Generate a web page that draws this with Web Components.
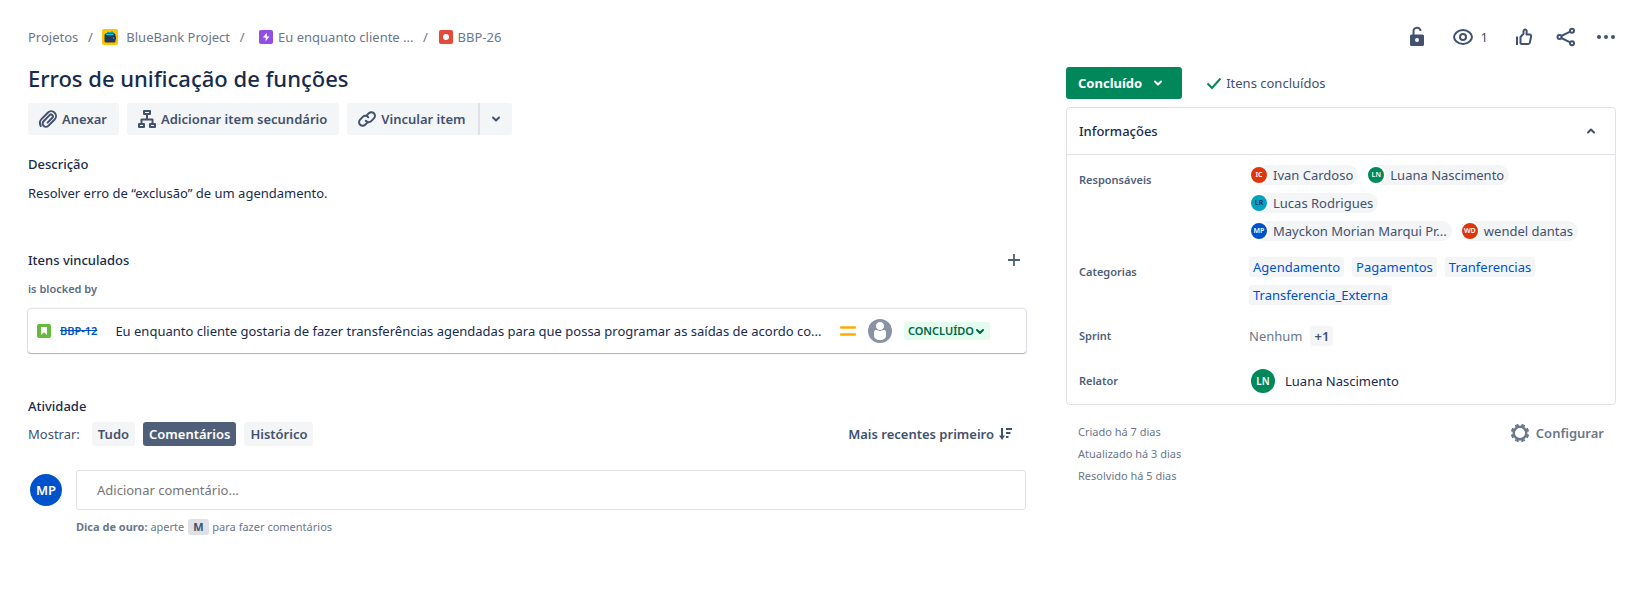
<!DOCTYPE html>
<html lang="pt-BR">
<head>
<meta charset="utf-8">
<meta name="viewport" content="width=device-width, initial-scale=1">
<title>BBP-26 Erros de unificação de funções</title>
<style>
  body {
    margin: 0;
    background: #fff;
    color: #172b4d;
    font: 400 13px/20px "Noto Sans", "Open Sans", sans-serif;
    --subtle: #6b778c;
    --button-text: #42526e;
    --surface: #f4f5f7;
    --line: #dfe1e6;
    --link: #0052cc;
    --green: #00875a;
  }
</style>
</head>
<body>
<issue-page></issue-page>

<script>
const define = (name, html, setup) => {
  const template = document.createElement('template');
  template.innerHTML = html;
  customElements.define(name, class extends HTMLElement {
    constructor() {
      super();
      this.attachShadow({ mode: 'open' }).append(template.content.cloneNode(true));
    }
    connectedCallback() {
      if (setup) setup(this, this.shadowRoot);
    }
  });
};

const reset = `
  *, *::before { box-sizing: border-box; }
  button { font: inherit; color: inherit; border: 0; margin: 0; padding: 0; background: none; cursor: pointer; }
  h1, h2, p, dl, dd, ul, ol { margin: 0; padding: 0; list-style: none; }
  a { color: inherit; text-decoration: none; }
`;

const stroke = (d, w = 2) =>
  `<path d="${d}" fill="none" stroke="currentColor" stroke-width="${w}" stroke-linecap="round" stroke-linejoin="round"/>`;

const icons = {
  attach: [24, stroke('M11.6 15.6l4.7-4.8a1.9 1.9 0 0 0-2.7-2.7l-6 6.1a3.3 3.3 0 0 0 4.7 4.7l6.3-6.4a4.8 4.8 0 0 0-6.8-6.8l-6.1 6.2a6 6 0 0 0-1 7.1', 2)],
  tree: [24,
    `<g fill="none" stroke="currentColor" stroke-width="2" stroke-linejoin="round">
      <rect x="9" y="4" width="6" height="3"/><rect x="4" y="17" width="5" height="3"/><rect x="15" y="17" width="5" height="3"/>
      <path d="M12 7v5M6.500 17v-4.500h11V17"/></g>`],
  link: [24, stroke('M11.500 8.600l2.300-2.300a3.600 3.600 0 0 1 5.100 0 3.600 3.600 0 0 1 0 5.100l-2.700 2.700a3.600 3.600 0 0 1-5.500-.4') +
    stroke('M12.500 15.400l-2.300 2.300a3.600 3.600 0 0 1-5.100 0 3.600 3.600 0 0 1 0-5.100l2.700-2.700a3.600 3.600 0 0 1 5.500.4')],
  down: [16, stroke('M5 6.500l3 3 3-3')],
  up: [16, stroke('M5 9.500l3-3 3 3')],
  caret: [12, stroke('M3 5l3 3 3-3')],
  plus: [24, '<path d="M12 6v12M6 12h12" stroke="#505f79" stroke-width="1.800"/>'],
  check: [16, '<path d="M1.500 8.500l4.500 4.500L14.500 3.500" fill="none" stroke="#00875a" stroke-width="2"/>'],
  sort: [16, '<path d="M4 2v9" stroke="currentColor" stroke-width="2"/><path d="M1 9.500h6L4 14z" fill="currentColor"/><path d="M8 3h6M8 7h4.500M8 11h2.500" stroke="currentColor" stroke-width="2"/>'],
  medium: [16, '<path d="M1 4.500h14M1 11.500h14" stroke="#ffab00" stroke-width="2.500" stroke-linecap="round"/>'],
  unlock: [24,
    `<path d="M8.500 10V6.300a3.500 3.500 0 0 1 7-.3" fill="none" stroke="currentColor" stroke-width="2"/>
     <path fill="currentColor" fill-rule="evenodd" d="M6.500 9.500h11A1.500 1.500 0 0 1 19 11v8.500a1.500 1.500 0 0 1-1.500 1.500h-11A1.500 1.500 0 0 1 5 19.500V11a1.500 1.500 0 0 1 1.500-1.500zM12 13a2 2 0 1 0 0 4 2 2 0 0 0 0-4z"/>`],
  eye: [24,
    `<g fill="none" stroke="currentColor" stroke-width="2"><path d="M12 5c5.500 0 9 4.400 9 7s-3.500 7-9 7-9-4.400-9-7 3.500-7 9-7z"/><circle cx="12" cy="12" r="3"/></g>`],
  like: [24,
    '<path d="M5 11.500V20" fill="none" stroke="currentColor" stroke-width="2"/>' +
    stroke('M8.500 12l3-3.200V6.200c0-2.400 3.400-2.200 3.200.3L14.500 9.500h3.300c.9 0 1.500.8 1.300 1.700l-1.200 6.300c-.1.900-.8 1.500-1.700 1.500H10a1.500 1.500 0 0 1-1.500-1.500z')],
  share: [24,
    `<g fill="none" stroke="currentColor" stroke-width="2"><circle cx="5.500" cy="12" r="2"/><circle cx="18" cy="5.800" r="2"/><circle cx="18" cy="18.200" r="2"/><path d="M7.300 11l8.900-4.300M7.300 13l8.900 4.300"/></g>`],
  more: [20, '<g fill="currentColor"><circle cx="3" cy="10" r="2"/><circle cx="10" cy="10" r="2"/><circle cx="17" cy="10" r="2"/></g>'],
  gear: [20,
    `<g transform="translate(10 10)" stroke="currentColor" fill="none"><circle r="6.300" stroke-width="2.400"/>
     <path stroke-width="3.600" d="M2.700-6.500l.8-2M-2.700-6.500l-.8-2M2.700 6.500l.8 2M-2.700 6.500l-.8 2M6.500 2.700l2 .8M6.500-2.700l2-.8M-6.500 2.700l-2 .8M-6.500-2.700l-2-.8"/></g>`],
  project: [16,
    `<rect width="16" height="16" rx="2" fill="#ffc400"/><path d="M4 5l2-2.500 2 1 2-1.500 2.500 2.500V6H4z" fill="#00a3bf"/>
     <rect x="2.500" y="4.500" width="11" height="9" rx="1.500" fill="#253858"/><path d="M4 5.500h7.500" stroke="#00c7e6"/>
     <rect x="10" y="7.500" width="4" height="3" rx="1" fill="#172b4d"/><circle cx="11.500" cy="9" r="1" fill="#2684ff"/>`],
  epic: [16, '<rect x="1" y="1" width="14" height="14" rx="2" fill="#904ee2"/><path d="M8.800 3.800L4.900 8.600h2.700v3.600l3.900-4.800H8.800z" fill="#fff"/>'],
  bug: [16, '<rect x="1" y="1" width="14" height="14" rx="2" fill="#e5493a"/><circle cx="8" cy="8" r="3" fill="#fff"/>'],
  story: [16, '<rect x="1" y="1" width="14" height="14" rx="2" fill="#63ba3c"/><path d="M5 4.500A.5.5 0 0 1 5.500 4h5a.5.5 0 0 1 .5.500V12L8 9.200 5 12z" fill="#fff"/>'],
  person: [24,
    `<circle cx="12" cy="12" r="12" fill="#8993a4"/>
     <path d="M6 13a2 2 0 0 1 2-2h8a2 2 0 0 1 2 2v4c0 2-2.500 4-6 4s-6-2-6-4z" fill="#fff"/><circle cx="12" cy="7" r="4.500" fill="#fff" stroke="#8993a4"/>`],
};

define('ui-icon', `<style>:host { display: inline-flex; flex: none; } svg { display: block; }</style>`,
  (host, root) => {
    const [size, body] = icons[host.getAttribute('name')];
    root.innerHTML += `<svg width="${size}" height="${size}" viewBox="0 0 ${size} ${size}" aria-hidden="true">${body}</svg>`;
  });

define('ui-avatar', `<style>
  :host { display: inline-flex; flex: none; align-items: center; justify-content: center; box-sizing: border-box;
    width: 32px; height: 32px; border-radius: 50%; background: #0052cc; color: #fff; font: 600 13px/16px "Noto Sans", sans-serif; }
  :host([size=medium]) { width: 24px; height: 24px; font-size: 10px; }
  :host([size=small]) { width: 20px; height: 20px; border: 2px solid #fff; font-size: 7px; line-height: 8px; }
  :host([tone=red]) { background: #de350b; }
  :host([tone=green]) { background: #00875a; }
  :host([tone=teal]) { background: #00a3bf; color: #172b4d; }
</style><slot></slot>`);

define('person-chip', `<style>${reset}
  :host { display: inline-flex; min-width: 0; }
  span { display: flex; align-items: center; gap: 4px; padding-right: 5px; border-radius: 10px; background: var(--surface); color: var(--button-text); white-space: nowrap; }
</style><span><slot name="avatar"></slot><slot></slot></span>`);

define('label-tag', `<style>${reset}
  :host { display: inline-flex; }
  a { padding: 0 4px; border-radius: 3px; background: var(--surface); color: var(--link); }
</style><a href="#"><slot></slot></a>`);

define('action-button', `<style>${reset}
  :host { display: inline-flex; }
  button { display: flex; align-items: center; gap: 2px; height: 32px; padding: 0 12px 0 8px; border-radius: 3px;
    background: var(--surface); color: var(--button-text); font-weight: 600; white-space: nowrap; }
  :host([split=start]) button { border-radius: 3px 0 0 3px; border-right: 2px solid var(--line); }
  :host([split=end]) button { border-radius: 0 3px 3px 0; padding: 0 8px; }
</style><button type="button"><slot></slot></button>`,
  (host, root) => {
    const label = host.getAttribute('label');
    if (label) root.querySelector('button').setAttribute('aria-label', label);
  });

define('filter-tab', `<style>${reset}
  :host { display: inline-flex; }
  button { height: 24px; padding: 0 6px; border-radius: 3px; background: var(--surface); color: var(--button-text); font-weight: 600; }
  :host([selected]) button { background: #505f79; color: #fff; }
</style><button type="button"><slot></slot></button>`);

define('section-title', `<style>${reset}
  :host { display: block; }
  h2 { font-size: 13px; line-height: 20px; font-weight: 500; }
</style><h2><slot></slot></h2>`);

define('issue-breadcrumbs', `<style>${reset}
  :host { display: block; color: var(--subtle); }
  ol { display: flex; align-items: center; }
  li { display: flex; align-items: center; white-space: nowrap; }
  li + li::before { content: "/"; width: 6px; margin: 0 9px; text-align: center; }
  a { display: flex; align-items: center; gap: 4px; }
  .project { gap: 8px; }
  .epic { padding-left: 4px; }
</style>
<nav aria-label="Trilha"><ol>
  <li><a href="#">Projetos</a></li>
  <li><a href="#" class="project"><ui-icon name="project"></ui-icon>BlueBank Project</a></li>
  <li><a href="#" class="epic"><ui-icon name="epic"></ui-icon>Eu enquanto cliente ...</a></li>
  <li><a href="#"><ui-icon name="bug"></ui-icon>BBP-26</a></li>
</ol></nav>`);

define('linked-issue', `<style>${reset}
  :host { display: block; }
  article { display: flex; align-items: center; height: 44px; padding: 0 36px 0 8px; border-radius: 3px;
    box-shadow: 0 1px 1px rgba(9,30,66,.25), 0 0 1px 1px rgba(9,30,66,.13); }
  .key { margin: 0 18px 0 8px; color: var(--link); font-size: 11px; font-weight: 600; text-decoration: line-through; }
  .summary { flex: 1; min-width: 0; overflow: hidden; text-overflow: ellipsis; white-space: nowrap; }
  .meta { display: flex; align-items: center; gap: 12px; padding-left: 12px; }
  .status { display: flex; align-items: center; height: 18px; padding: 0 4px; border-radius: 3px; background: #e3fcef; color: #006644;
    font-size: 11px; line-height: 16px; font-weight: 600; }
</style>
<article>
  <ui-icon name="story"></ui-icon>
  <a class="key" href="#">BBP-12</a>
  <a class="summary" href="#">Eu enquanto cliente gostaria de fazer transferências agendadas para que possa programar as saídas de acordo co...</a>
  <div class="meta">
    <ui-icon name="medium"></ui-icon>
    <ui-icon name="person"></ui-icon>
    <button type="button" class="status">CONCLUÍDO<ui-icon name="caret"></ui-icon></button>
  </div>
</article>`);

define('comment-box', `<style>${reset}
  :host { display: grid; grid-template-columns: 32px minmax(0, 1fr); column-gap: 14px; padding-left: 2px; align-items: center; }
  input { width: 100%; height: 40px; padding: 0 20px; border: 1px solid var(--line); border-radius: 3px; background: #fff; font: inherit; }
  input::placeholder { color: #757575; opacity: 1; }
  p { grid-column: 2; margin-top: 9px; color: var(--subtle); font-size: 11px; line-height: 16px; }
  b { font-weight: 700; }
  kbd { display: inline-block; margin: 0 1px; padding: 0 5px; border-radius: 3px; background: var(--line); color: var(--button-text); font: inherit; font-weight: 700; }
</style>
<ui-avatar>MP</ui-avatar>
<input type="text" aria-label="Adicionar comentário" placeholder="Adicionar comentário...">
<p><b>Dica de ouro:</b> aperte <kbd>M</kbd> para fazer comentários</p>`);

define('issue-main', `<style>${reset}
  :host { display: block; min-width: 0; }
  h1 { margin-top: 17px; font-size: 22px; line-height: 28px; font-weight: 500; }
  .toolbar { display: flex; gap: 8px; margin-top: 11px; }
  .split { display: flex; }
  .description { margin-top: 19px; }
  .description p { margin-top: 9px; }
  .links { margin-top: 47px; }
  .bar { display: flex; align-items: center; justify-content: space-between; height: 20px; color: var(--button-text); }
  .bar section-title { color: #172b4d; }
  .bar button { display: flex; }
  .relation { margin: 9px 0 10px; color: #5e6c84; font-size: 11px; font-weight: 600; }
  .activity { margin-top: 43px; }
  .filters { display: flex; align-items: center; gap: 8px; margin: 6px 0 24px; padding-right: 12px; }
  .filters > span { margin-right: 4px; color: var(--button-text); }
  .order { display: flex; align-items: center; gap: 4px; margin-left: auto; color: var(--button-text); font-weight: 600; }
</style>
<issue-breadcrumbs></issue-breadcrumbs>
<h1>Erros de unificação de funções</h1>
<div class="toolbar">
  <action-button><ui-icon name="attach"></ui-icon>Anexar</action-button>
  <action-button><ui-icon name="tree"></ui-icon>Adicionar item secundário</action-button>
  <div class="split">
    <action-button split="start"><ui-icon name="link"></ui-icon>Vincular item</action-button>
    <action-button split="end" label="Mais opções de vínculo"><ui-icon name="down"></ui-icon></action-button>
  </div>
</div>
<section class="description">
  <section-title>Descrição</section-title>
  <p>Resolver erro de “exclusão” de um agendamento.</p>
</section>
<section class="links">
  <div class="bar"><section-title>Itens vinculados</section-title><button type="button" aria-label="Vincular outro item"><ui-icon name="plus"></ui-icon></button></div>
  <p class="relation">is blocked by</p>
  <linked-issue></linked-issue>
</section>
<section class="activity">
  <section-title>Atividade</section-title>
  <div class="filters">
    <span>Mostrar:</span>
    <filter-tab>Tudo</filter-tab>
    <filter-tab selected>Comentários</filter-tab>
    <filter-tab>Histórico</filter-tab>
    <button type="button" class="order">Mais recentes primeiro<ui-icon name="sort"></ui-icon></button>
  </div>
  <comment-box></comment-box>
</section>`);

define('issue-actions', `<style>${reset}
  :host { display: flex; align-items: center; justify-content: flex-end; gap: 18px; height: 20px; color: var(--button-text); }
  button { display: flex; align-items: center; }
  .watch { gap: 6px; padding: 0 6px 0 4px; }
</style>
<button type="button" aria-label="Restrições"><ui-icon name="unlock"></ui-icon></button>
<button type="button" class="watch" title="Observadores"><ui-icon name="eye"></ui-icon>1</button>
<button type="button" aria-label="Votar"><ui-icon name="like"></ui-icon></button>
<button type="button" aria-label="Compartilhar"><ui-icon name="share"></ui-icon></button>
<button type="button" aria-label="Mais ações"><ui-icon name="more"></ui-icon></button>`);

define('issue-field', `<style>${reset}
  :host { display: grid; grid-template-columns: 170px minmax(0, 1fr); align-items: center; min-height: 29px; }
  :host([multiline]) { align-items: start; }
  .name { color: #505f79; font-size: 11px; font-weight: 600; }
  :host([multiline]) .name { padding-top: 5px; }
  .value { display: flex; flex-wrap: wrap; align-items: center; gap: 8px; }
</style>
<div class="name" id="name"></div><div class="value" role="group" aria-labelledby="name"><slot></slot></div>`,
  (host, root) => { root.getElementById('name').textContent = host.getAttribute('name'); });

define('issue-details', `<style>${reset}
  :host { display: block; border: 1px solid var(--line); border-radius: 4px; }
  header { display: flex; align-items: center; justify-content: space-between; height: 47px; padding: 0 16px 0 12px; border-bottom: 1px solid var(--line); }
  header button { display: flex; color: var(--button-text); }
  .body { display: grid; gap: 16px; padding: 10px 12px 9px; }
  .people { display: flex; gap: 8px; width: 100%; }
  .muted { color: var(--subtle); }
  .count { padding: 0 4px; border-radius: 3px; background: var(--surface); color: var(--button-text); font-weight: 600; }
  .reporter { display: flex; align-items: center; gap: 10px; padding-left: 2px; }
</style>
<header><section-title>Informações</section-title><button type="button" aria-label="Recolher informações" aria-expanded="true"><ui-icon name="up"></ui-icon></button></header>
<div class="body">
  <issue-field name="Responsáveis" multiline>
    <div class="people">
      <person-chip><ui-avatar slot="avatar" size="small" tone="red">IC</ui-avatar>Ivan Cardoso</person-chip>
      <person-chip><ui-avatar slot="avatar" size="small" tone="green">LN</ui-avatar>Luana Nascimento</person-chip>
    </div>
    <div class="people">
      <person-chip><ui-avatar slot="avatar" size="small" tone="teal">LR</ui-avatar>Lucas Rodrigues</person-chip>
    </div>
    <div class="people">
      <person-chip><ui-avatar slot="avatar" size="small">MP</ui-avatar>Mayckon Morian Marqui Pr...</person-chip>
      <person-chip><ui-avatar slot="avatar" size="small" tone="red">WD</ui-avatar>wendel dantas</person-chip>
    </div>
  </issue-field>
  <issue-field name="Categorias" multiline>
    <label-tag>Agendamento</label-tag>
    <label-tag>Pagamentos</label-tag>
    <label-tag>Tranferencias</label-tag>
    <label-tag>Transferencia_Externa</label-tag>
  </issue-field>
  <issue-field name="Sprint"><span class="muted">Nenhum</span><button type="button" class="count">+1</button></issue-field>
  <issue-field name="Relator"><span class="reporter"><ui-avatar size="medium" tone="green">LN</ui-avatar>Luana Nascimento</span></issue-field>
</div>`);

define('issue-sidebar', `<style>${reset}
  :host { display: block; min-width: 0; }
  .state { display: flex; align-items: center; gap: 24px; margin: 20px 0 8px; }
  .status { display: flex; align-items: center; gap: 8px; height: 32px; padding: 0 16px 0 12px; border-radius: 3px; background: var(--green); color: #fff; font-weight: 700; }
  .resolution { display: flex; align-items: center; gap: 4px; color: var(--button-text); }
  footer { display: flex; align-items: flex-start; justify-content: space-between; padding: 16px 12px; color: var(--subtle); }
  li { font-size: 11px; line-height: 22px; }
  .configure { display: flex; align-items: center; gap: 6px; height: 24px; font-weight: 600; }
</style>
<issue-actions></issue-actions>
<div class="state">
  <button type="button" class="status">Concluído<ui-icon name="down"></ui-icon></button>
  <span class="resolution"><ui-icon name="check"></ui-icon>Itens concluídos</span>
</div>
<issue-details></issue-details>
<footer>
  <ul><li>Criado há 7 dias</li><li>Atualizado há 3 dias</li><li>Resolvido há 5 dias</li></ul>
  <button type="button" class="configure"><ui-icon name="gear"></ui-icon>Configurar</button>
</footer>`);

define('issue-page', `<style>
  :host { display: grid; grid-template-columns: minmax(0, 499fr) minmax(0, 275fr); column-gap: 40px; padding: 27px 13px 24px 28px; }
</style><issue-main></issue-main><issue-sidebar></issue-sidebar>`);
</script>
</body>
</html>
